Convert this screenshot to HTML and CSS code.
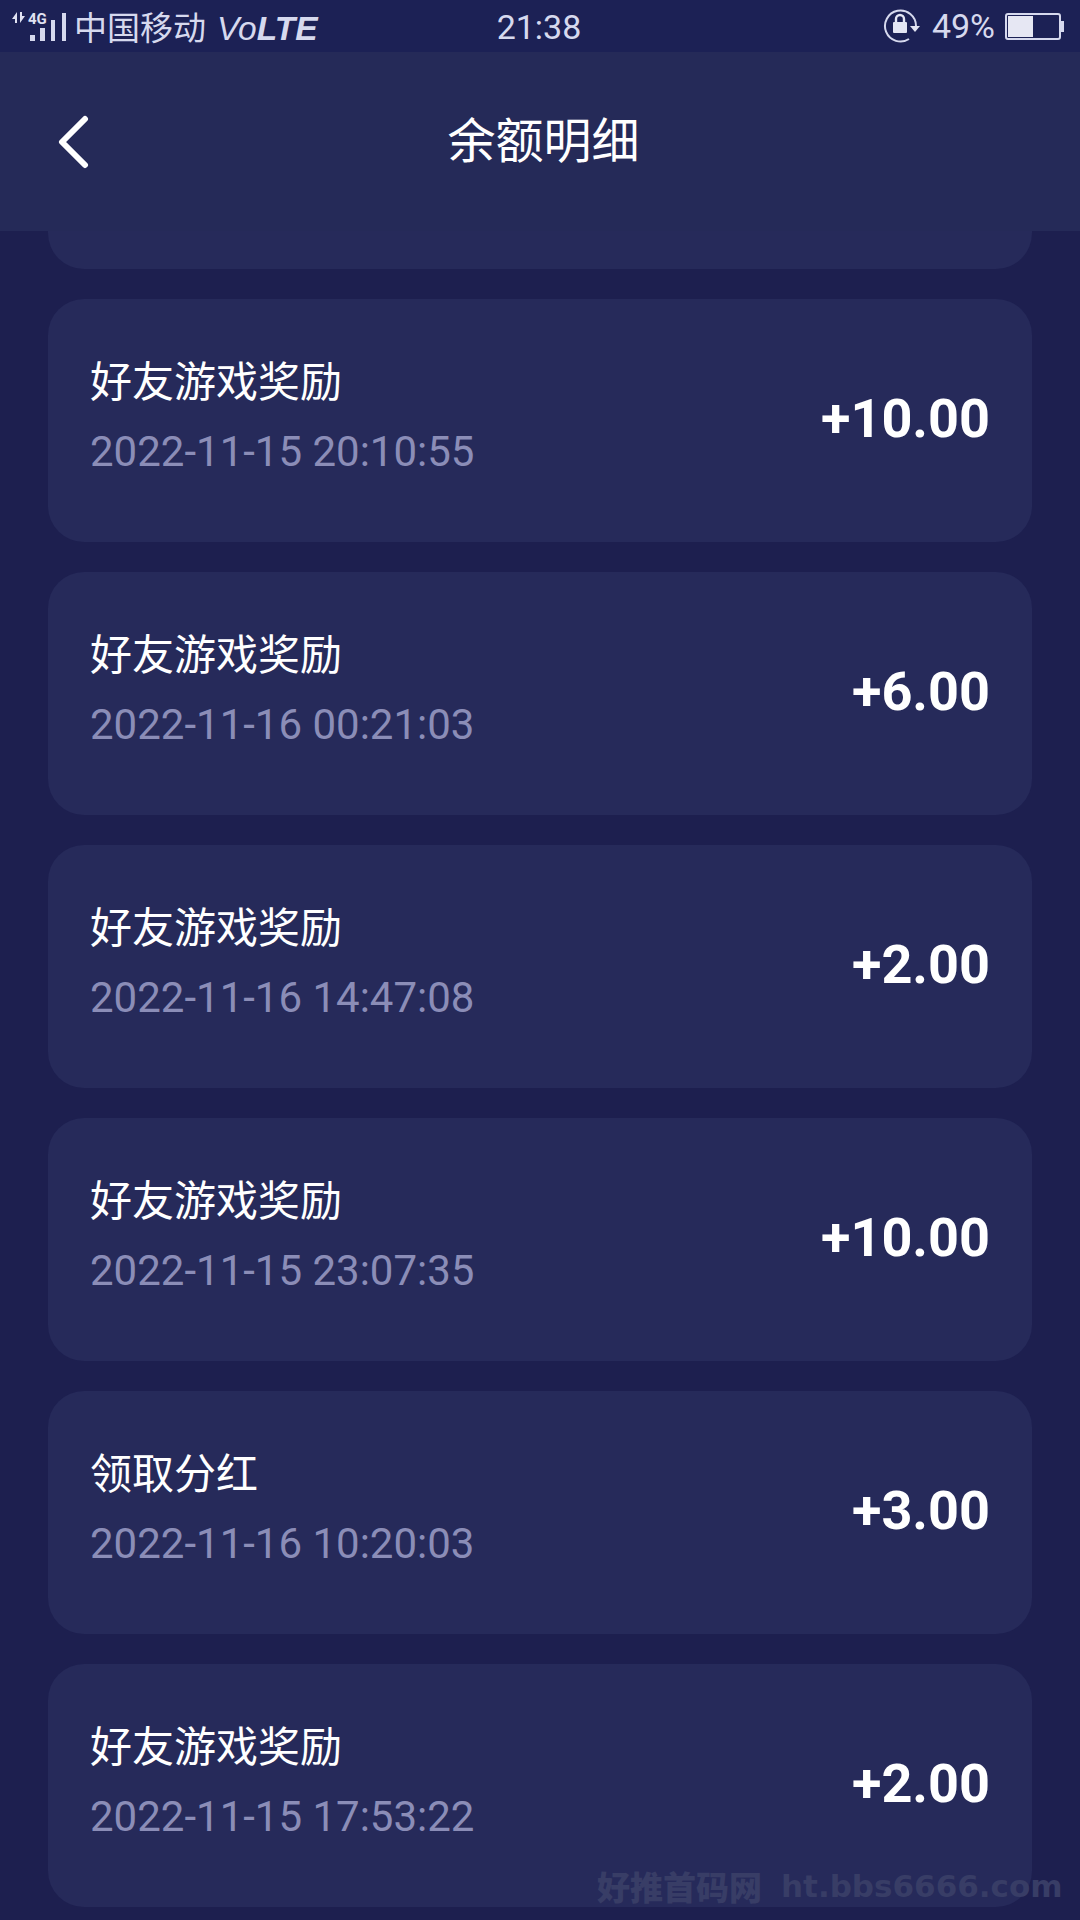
FILE: index.html
```html
<!DOCTYPE html>
<html lang="zh-CN">
<head>
<meta charset="utf-8">
<title>余额明细</title>
<link rel="stylesheet" href="styles.css">
</head>
<body>
<div class="app">
  <div class="statusbar">
    <div class="sb-left">
      <svg class="signal" width="68" height="52" viewBox="0 0 68 52">
        <path d="M12 19L17 12V23H15V19ZM25 16L20 23V12H22V16Z" fill="#e0e2f2"/>
        <text x="28" y="24" class="sig-text">4G</text>
        <rect x="30" y="35" width="5" height="6" fill="#d6d9ee"/>
        <rect x="40" y="28" width="5" height="13" fill="#d6d9ee"/>
        <rect x="51" y="20" width="4" height="21" fill="#d6d9ee"/>
        <rect x="62" y="13" width="4" height="28" fill="#d6d9ee"/>
      </svg>
      <span class="carrier">中国移动</span>
      <span class="volte"><span class="vo">Vo</span>LTE</span>
    </div>
    <div class="sb-time">21:38</div>
    <div class="sb-right">
      <svg class="lock" width="38" height="34" viewBox="0 0 38 34" fill="none">
        <path d="M33 17A15.5 15.5 0 1 0 26 30" stroke="#d6d9ee" stroke-width="2"/>
        <path d="M27 17h10l-5 6z" fill="#e4e6f4"/>
        <rect x="10" y="13" width="14" height="11" rx="1" fill="#e4e6f4"/>
        <path d="M13 13V10a4 4 0 0 1 8 0v3" stroke="#e4e6f4" stroke-width="2.4"/>
      </svg>
      <span class="pct">49%</span>
      <div class="battery">
        <div class="battery-body"><div class="battery-fill"></div></div>
        <div class="battery-tip"></div>
      </div>
    </div>
  </div>

  <header class="navbar">
    <svg class="back" width="34" height="54" viewBox="0 0 34 54" fill="none">
      <path d="M28 4L5 27L28 50" stroke="#fff" stroke-width="6" stroke-linecap="round" stroke-linejoin="round"/>
    </svg>
    <h1 class="nav-title">余额明细</h1>
  </header>

  <main class="list">
    <div class="card-stub"></div>
    <div class="card"><div class="info"><div class="name">好友游戏奖励</div><div class="date">2022-11-15 20:10:55</div></div><div class="amount">+10.00</div></div>
    <div class="card"><div class="info"><div class="name">好友游戏奖励</div><div class="date">2022-11-16 00:21:03</div></div><div class="amount">+6.00</div></div>
    <div class="card"><div class="info"><div class="name">好友游戏奖励</div><div class="date">2022-11-16 14:47:08</div></div><div class="amount">+2.00</div></div>
    <div class="card"><div class="info"><div class="name">好友游戏奖励</div><div class="date">2022-11-15 23:07:35</div></div><div class="amount">+10.00</div></div>
    <div class="card"><div class="info"><div class="name">领取分红</div><div class="date">2022-11-16 10:20:03</div></div><div class="amount">+3.00</div></div>
    <div class="card"><div class="info"><div class="name">好友游戏奖励</div><div class="date">2022-11-15 17:53:22</div></div><div class="amount">+2.00</div></div>
  </main>

  <div class="watermark"><span class="wm-cn">好推首码网</span><span class="wm-en">ht.bbs6666.com</span></div>
</div>
</body>
</html>
```
FILE: styles.css
```css
* { box-sizing: border-box; }
html, body { margin: 0; padding: 0; }
body { background: #1d1f4f; font-family: Roboto, "Noto Sans CJK SC", sans-serif; }
.app { position: relative; width: 1080px; height: 1920px; overflow: hidden; background: #1d1f4f; display: flex; flex-direction: column; }

.statusbar { height: 52px; flex: none; background: #1c2155; color: #d6d9ee; display: grid; grid-template-columns: 1fr auto 1fr; align-items: center; padding: 0 16px 0 0; font-size: 32px; }
.sb-left { display: flex; align-items: center; }
.signal { flex: none; margin-right: 6px; }
.sig-text { font: 700 15px Roboto, sans-serif; fill: #e0e2f2; }
.carrier { font-family: "Noto Sans CJK SC", sans-serif; font-weight: 400; font-size: 33px; line-height: 52px; }
.volte { font: italic 700 33.5px "Liberation Sans", sans-serif; margin-left: 11px; margin-top: 6px; color: #d6d9ee; }
.vo { font-weight: 400; }
.sb-time { font-size: 34px; font-weight: 400; margin-left: 14px; margin-top: 2px; }
.sb-right { display: flex; align-items: center; justify-content: flex-end; }
.lock { flex: none; }
.pct { font-size: 34px; font-weight: 400; margin-left: 11px; margin-right: 10px; }
.battery { display: flex; align-items: center; }
.battery-body { width: 56px; height: 27px; border: 2px solid #d6d9ee; border-radius: 3px; padding: 1px; background: #1c2155; }
.battery-fill { width: 25px; height: 100%; background: #e6e7f3; }
.battery-tip { width: 3px; height: 11px; background: #d6d9ee; }

.navbar { height: 179px; flex: none; background: #252a58; display: flex; align-items: center; justify-content: center; position: relative; padding-bottom: 10px; }
.back { position: absolute; left: 57px; top: 63px; }
.nav-title { margin: 0; font-family: "Noto Sans CJK SC", sans-serif; font-weight: 400; font-size: 48px; color: #fff; margin-left: 7px; }

.list { display: flex; flex-direction: column; gap: 30px; padding: 0 48px; }
.card-stub { height: 38px; background: #262a5a; border-radius: 0 0 36px 36px; }
.card { height: 243px; flex: none; background: #262a5a; border-radius: 36px; display: flex; align-items: center; justify-content: space-between; padding: 0 42px; }
.info { display: flex; flex-direction: column; padding-bottom: 10px; }
.name { font-family: "Noto Sans CJK SC", sans-serif; font-size: 42px; line-height: 50px; color: #fff; }
.date { font-size: 42px; line-height: 50px; margin-top: 23px; color: #8b8db7; }
.amount { font-size: 54px; font-weight: 700; color: #fff; margin-bottom: 5px; }

.watermark { position: absolute; left: 597px; top: 1866px; display: flex; gap: 19px; align-items: center; color: #383d66; line-height: 40px; white-space: nowrap; }
.wm-cn { font-family: "Noto Sans CJK SC", sans-serif; font-weight: 900; font-size: 33px; }
.wm-en { font-family: "DejaVu Sans", sans-serif; font-weight: 700; font-size: 31px; }
```
